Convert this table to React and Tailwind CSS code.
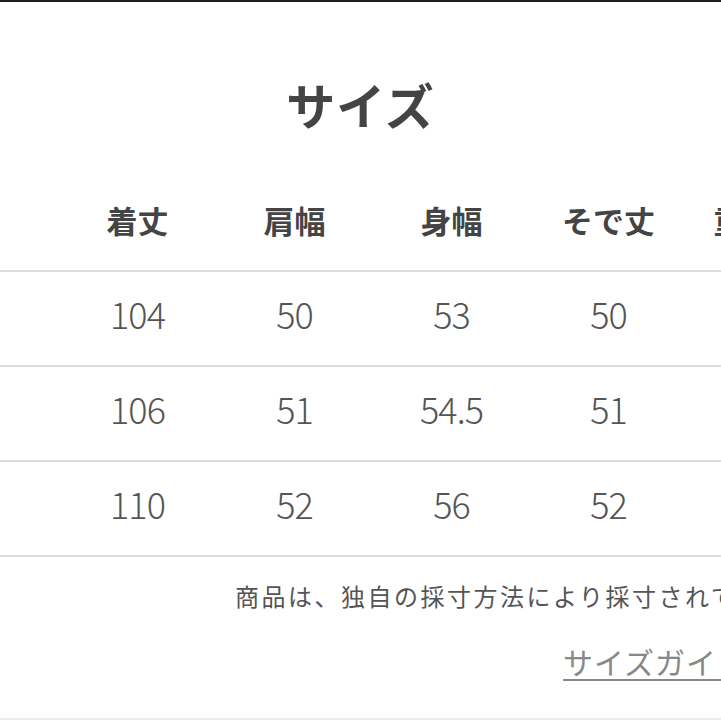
const headers = ['着丈', '肩幅', '身幅', 'そで丈', '重さ(g)']

const rows = [
  ['104', '50', '53', '50'],
  ['106', '51', '54.5', '51'],
  ['110', '52', '56', '52'],
]

const jp = { fontFamily: '"Noto Sans CJK JP", "Noto Sans", sans-serif' }

export default function App() {
  return (
    <div className="w-[721px] h-[721px] overflow-hidden bg-white flex flex-col text-[#444]" style={jp}>
      {/* top edge */}
      <div className="h-[2px] bg-[#1e1e1e] shrink-0" />

      {/* title */}
      <div className="h-[168px] shrink-0 flex items-center justify-center pt-[34px]">
        <h1 className="text-[49px] font-bold tracking-[1px] leading-none">サイズ</h1>
      </div>

      {/* table */}
      <div className="w-[900px] shrink-0">
        <div className="grid grid-cols-[59px_repeat(5,157px)] h-[102px] border-b-2 border-[#dcdcdc] pb-[2px]">
          <div />
          {headers.map(h => (
            <div key={h} className="flex items-center justify-center text-[31px] font-bold leading-none whitespace-nowrap">
              {h}
            </div>
          ))}
        </div>
        {rows.map((r, i) => (
          <div key={i} className="grid grid-cols-[59px_repeat(5,157px)] h-[95px] border-b-2 border-[#dcdcdc] pb-[12px]">
            <div />
            {r.map((v, j) => (
              <div key={j} className="flex items-center justify-center text-[36px] font-light leading-none text-[#555] tracking-[-1px]">
                {v}
              </div>
            ))}
            <div />
          </div>
        ))}
      </div>

      {/* note */}
      <div className="h-[80px] shrink-0 flex items-center pl-[235px] pb-[2px]">
        <p className="text-[24px] leading-none whitespace-nowrap tracking-[2.5px] text-[#555]">
          商品は、独自の採寸方法により採寸されております。
        </p>
      </div>

      {/* guide link */}
      <div className="h-[66px] shrink-0 flex items-start pl-[563px] pt-[6px]">
        <a className="text-[30px] leading-[36px] whitespace-nowrap tracking-[1px] text-[#888] underline decoration-2 underline-offset-[5px]">
          サイズガイド
        </a>
      </div>

      <div className="flex-1" />
      <div className="h-[2px] bg-[#ececec] shrink-0 mb-[1px]" />
    </div>
  )
}
